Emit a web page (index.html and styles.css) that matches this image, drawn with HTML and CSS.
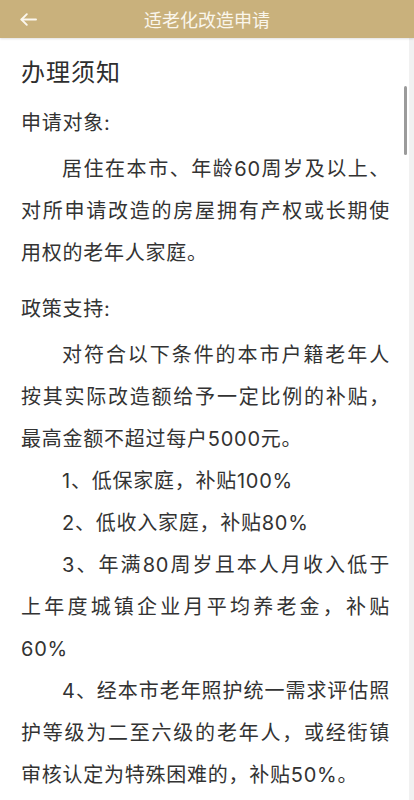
FILE: index.html
```html
<!DOCTYPE html>
<html lang="zh-CN">
<head>
<meta charset="utf-8">
<meta name="viewport" content="width=device-width, initial-scale=1">
<title>适老化改造申请</title>
<link rel="stylesheet" href="styles.css">
</head>
<body>
<header class="topbar">
  <button class="back" aria-label="返回">
    <svg width="17" height="13" viewBox="0 0 17 13" fill="none" stroke="#fbf7ee" stroke-width="1.9" stroke-linecap="round" stroke-linejoin="round">
      <path d="M16 6.5H1.5"/>
      <path d="M6.8 1.2L1.5 6.5l5.3 5.3"/>
    </svg>
  </button>
  <h1 class="title">适老化改造申请</h1>
</header>
<div class="body-wrap">
  <main class="content">
    <h2 class="heading">办理须知</h2>
    <section class="section">
      <p class="label">申请对象:</p>
      <p class="para">居住在本市、年龄60周岁及以上、对所申请改造的房屋拥有产权或长期使用权的老年人家庭。</p>
    </section>
    <section class="section">
      <p class="label">政策支持:</p>
      <p class="para">对符合以下条件的本市户籍老年人按其实际改造额给予一定比例的补贴，最高金额不超过每户5000元。</p>
      <p class="para">1、低保家庭，补贴100%</p>
      <p class="para">2、低收入家庭，补贴80%</p>
      <p class="para">3、年满80周岁且本人月收入低于上年度城镇企业月平均养老金，补贴60%</p>
      <p class="para">4、经本市老年照护统一需求评估照护等级为二至六级的老年人，或经街镇审核认定为特殊困难的，补贴50%。</p>
    </section>
  </main>
  <div class="track"></div>
  <div class="thumb"></div>
</div>
</body>
</html>
```
FILE: styles.css
```css
* {
  box-sizing: border-box;
}

html, body {
  margin: 0;
  padding: 0;
  background: #ffffff;
}

body {
  font-family: Inter, "Noto Sans CJK SC", "Noto Sans", sans-serif;
  color: #333333;
  overflow: hidden;
}

.topbar {
  position: relative;
  z-index: 2;
  height: 38px;
  background: #c9b17c;
  display: flex;
  align-items: center;
  justify-content: center;
  box-shadow: 0 1px 2px rgba(0, 0, 0, 0.12);
}

.back {
  position: absolute;
  left: 20px;
  top: 13px;
  width: 17px;
  height: 13px;
  padding: 0;
  border: 0;
  background: none;
  display: flex;
}

.title {
  margin: 0;
  font-family: "Noto Sans CJK SC", sans-serif;
  font-size: 18px;
  font-weight: 400;
  line-height: 38px;
  color: #faf6ec;
}

.body-wrap {
  position: relative;
  display: flex;
  height: 762px;
}

.content {
  flex: 1;
  padding: 12px 0 0 21px;
}

.heading {
  margin: 0 0 10px;
  font-family: "Noto Sans CJK SC", sans-serif;
  font-size: 24px;
  font-weight: 400;
  line-height: 42px;
  letter-spacing: 1px;
  color: #2e2e2e;
}

.section + .section {
  margin-top: 14px;
}

.label {
  margin: 0 0 4px;
  font-size: 20px;
  line-height: 42px;
  letter-spacing: 0.75px;
}

.para {
  margin: 0;
  width: 369px;
  font-size: 20px;
  line-height: 42px;
  letter-spacing: 0.75px;
  text-indent: 41px;
  text-align: justify;
}

.track {
  width: 5px;
  background: #f1f1f1;
}

.thumb {
  position: absolute;
  left: 404px;
  top: 48px;
  width: 3px;
  height: 69px;
  border-radius: 2px;
  background: #9b9b9b;
}
```
